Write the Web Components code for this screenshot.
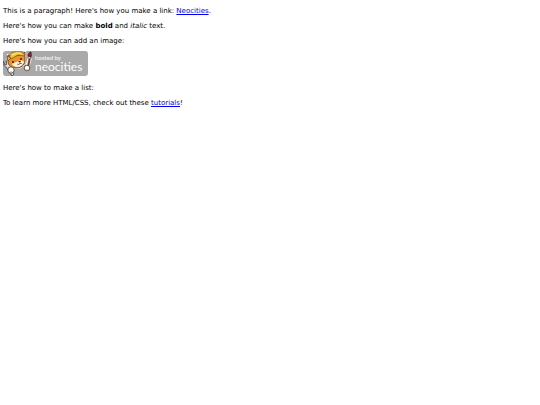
<!DOCTYPE html>
<html lang="en">
<head>
<meta charset="utf-8">
<meta name="viewport" content="width=device-width, initial-scale=1">
<title>My Page</title>
<style>
  body {
    margin: 0;
    background: #fff;
    color: #000;
    font: 7px/11px "DejaVu Sans", Verdana, sans-serif;
  }
</style>
</head>
<body>

<site-page>
  <page-text>This is a paragraph! Here's how you make a link: <text-link href="#neocities">Neocities</text-link>.</page-text>
  <page-text>Here's how you can make <strong>bold</strong> and <em>italic</em> text.</page-text>
  <page-text>Here's how you can add an image:</page-text>
  <host-badge></host-badge>
  <page-text>Here's how to make a list:</page-text>
  <page-text>To learn more HTML/CSS, check out these <text-link href="#tutorials">tutorials</text-link>!</page-text>
</site-page>

<template id="badge-template">
  <style>
    :host { display: block; padding-bottom: 3px; }
    svg { display: block; width: 85px; height: 25px; }
    text { fill: #fff; font-family: Lato, sans-serif; }
    .small { font-size: 6px; }
    .name { font-size: 12px; }
  </style>
  <svg viewBox="0 0 85 25" role="img" aria-label="Hosted by Neocities">
    <rect width="85" height="25" rx="3" fill="#a9a9a9"/>
    <!-- wrench -->
    <path d="M0 10l2 4 2-1-1-3c3 1 4 3 3 5l5 8-2 2-6-9c-2-1-3-2-3-6z" fill="#d5d9dc" stroke="#3a3a3a" stroke-width=".8"/>
    <!-- brush -->
    <path d="M27 7l-3 9" stroke="#f4f4f4" stroke-width="4"/>
    <path d="M27 6l-2 10" stroke="#70402a" stroke-width="2"/>
    <path d="M26 5l2 1-1 2-2-1z" fill="#e8e8e8" stroke="#444" stroke-width=".5"/>
    <path d="M25 5c0-2 1-4 3-4 0 2 1 3 0 5z" fill="#8d2038" stroke="#4a1518" stroke-width=".7"/>
    <!-- head -->
    <path d="M5 4L5 12c1 3 4 5 8 5 5 0 9-3 9-7l0-9-5 3-6 1z" fill="#ed9328" stroke="#fff" stroke-width="2.200"/>
    <path d="M5 4L5 12c1 3 4 5 8 5 5 0 9-3 9-7l0-9-5 3-6 1z" fill="#ed9328" stroke="#4a2c16" stroke-width=".8"/>
    <path d="M9 13c2-1 3-2 5-2 2-2 6-2 7 0-1 3-4 5-7 5-2 0-4-1-5-3z" fill="#fff4e4"/>
    <!-- helmet -->
    <path d="M7 7C6 3 9 1 12 1l6 0c3 1 4 3 3 4l-6-1-7 4z" fill="#f0c33c" stroke="#7d5818" stroke-width=".8"/>
    <path d="M9 4l4-2 5 0" fill="none" stroke="#fff0a0" stroke-width="1"/>
    <path d="M4 5l4 2-3 3z" fill="#f7b168" stroke="#4a2c16" stroke-width=".6"/>
    <circle cx="10" cy="11" r="1" fill="#2d2018"/>
    <circle cx="18" cy="8" r="1" fill="#2d2018"/>
    <path d="M15 10l3 0-1 2z" fill="#4a2018"/>
    <path d="M14 13c2 1 3 0 3-1 1 1 1 1 2 0" fill="none" stroke="#3b2422" stroke-width=".7"/>
    <!-- paws -->
    <circle cx="8" cy="19" r="3.200" fill="#fff" stroke="#333" stroke-width=".8"/>
    <path d="M7 21l2 0" stroke="#e29a48" stroke-width="1"/>
    <circle cx="24" cy="17" r="2.800" fill="#fff" stroke="#333" stroke-width=".8"/>
    <path d="M23 19l2 0" stroke="#e29a48" stroke-width="1"/>
    <text class="small" x="32" y="9">hosted by</text>
    <text class="name" x="32" y="20">neocities</text>
  </svg>
</template>

<script>
  // SitePage - stacks the blocks of the page
  class SitePage extends HTMLElement {
    constructor() {
      super();
      this.attachShadow({ mode: 'open' }).innerHTML = `
        <style>
          :host { display: block; }
          main {
            display: flex;
            flex-direction: column;
            gap: 4px;
            padding: 6px 3px;
          }
        </style>
        <main><slot></slot></main>`;
    }
  }

  // PageText - one paragraph
  class PageText extends HTMLElement {
    constructor() {
      super();
      this.attachShadow({ mode: 'open' }).innerHTML = `
        <style>
          :host { display: block; }
          p { margin: 0; }
        </style>
        <p><slot></slot></p>`;
    }
  }

  // TextLink - inline link, takes an href attribute
  class TextLink extends HTMLElement {
    constructor() {
      super();
      this.attachShadow({ mode: 'open' }).innerHTML =
        `<style>:host { display: inline; } a { color: #0000ee; text-decoration: underline; }</style><a><slot></slot></a>`;
    }

    connectedCallback() {
      this.shadowRoot.querySelector('a').href = this.getAttribute('href');
    }
  }

  // HostBadge - the picture with the cat
  class HostBadge extends HTMLElement {
    constructor() {
      super();
      const template = document.getElementById('badge-template');
      this.attachShadow({ mode: 'open' }).append(template.content.cloneNode(true));
    }
  }

  customElements.define('site-page', SitePage);
  customElements.define('page-text', PageText);
  customElements.define('text-link', TextLink);
  customElements.define('host-badge', HostBadge);
</script>
</body>
</html>
